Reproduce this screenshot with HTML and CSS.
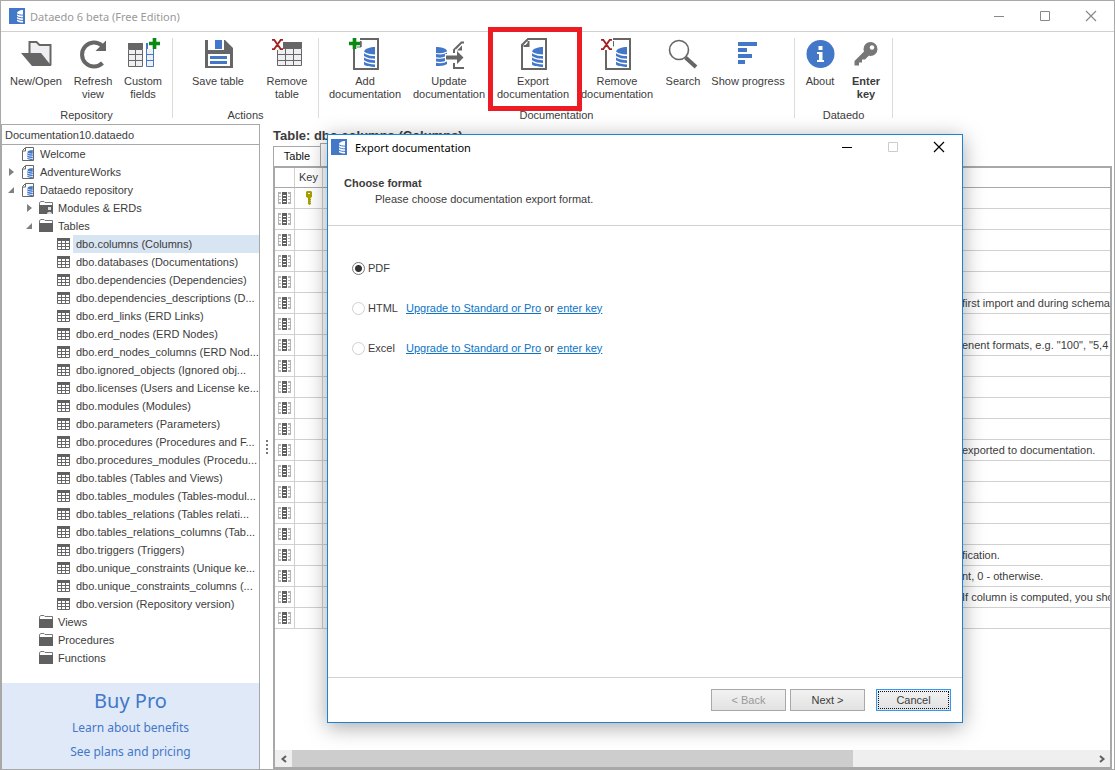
FILE: index.html
```html
<!DOCTYPE html>
<html lang="en">
<head>
<meta charset="utf-8">
<title>Dataedo 6 beta (Free Edition)</title>
<link rel="stylesheet" href="styles.css">
</head>
<body>
<svg class="defs" aria-hidden="true">
  <symbol id="logo" viewBox="0 0 16 16"><path fill="#4378c8" d="M0 0h16v16H0z"/><path fill="#fff" d="M14 2v12.500c-3 0-6-.4-6-2V5c0-1.500 3-3 6-3z"/><path d="M7.500 5.500c2 1.400 4 1.600 6.500 1.600M7.500 8.200c2 1.400 4 1.600 6.500 1.600M7.500 10.800c2 1.400 4 1.600 6.500 1.600" stroke="#4378c8" fill="none"/></symbol>
  <symbol id="db" viewBox="0 0 11 20"><path fill="#4378c8" d="M11 0v7.500C7 7.500 2.500 6.800 0 4.500 1 1.500 6 0 11 0zM0 6.200c3 2 7 2.800 11 2.800v2.800c-4 0-8-.6-11-2.700zM0 10.600c3 2 7 2.700 11 2.700V16c-4 0-8-.6-11-2.700zM0 14.800c3 2 7 2.700 11 2.700V20c-4-.2-9-.6-11-2.500z"/></symbol>
  <symbol id="page" viewBox="0 2 32 36"><path d="M11 3h18v30H5V9z" fill="#fff" stroke="#666" stroke-width="2"/><path d="M12.500 5v6H6.500v-2H8.500L10.500 7V5z" fill="#666"/><use href="#db" x="15" y="11" width="11" height="20"/></symbol>
  <symbol id="plus" viewBox="0 0 12 12"><path fill="#0a8a12" d="M4 0h4v4h4v4H8v4H4V8H0V4h4z"/></symbol>
  <symbol id="cross" viewBox="0 0 12 12"><path d="M0 1h2.500l7 10H12M12 1H9.500l-7 10H0" fill="none" stroke="#a52020" stroke-width="2"/></symbol>
  <symbol id="open" viewBox="0 2 32 36"><path d="M9.500 25V6h7l3 3h11v20" fill="#efeff2" stroke="#666" stroke-width="2"/><path d="M1 17h20l10.500 13H12z" fill="#666"/></symbol>
  <symbol id="refresh" viewBox="0 2 32 36"><path d="M25 9.500A12 12 0 1 0 25.500 27" fill="none" stroke="#666" stroke-width="4"/><path d="M29 4.500V15H18.500z" fill="#666"/></symbol>
  <symbol id="fields" viewBox="0 2 34 36"><path d="M2.500 13.500h14v17h-14zM2.500 18.500h14M2.500 24.500h14M9.500 13v18" fill="#efeff2" stroke="#666"/><path d="M2 7h15v6H2z" fill="#666"/><path d="M20.500 7.500h7v23h-7zM21 12.500h7M21 18.500h7M21 24.500h7" fill="#efeff2" stroke="#4378c8"/><path d="M20 7h8v6h-8z" fill="#4378c8"/><path d="M22 2h12v11H22z" fill="#fff"/><use href="#plus" x="23" y="2" width="11" height="11"/></symbol>
  <symbol id="save" viewBox="0 2 32 36"><path d="M3 4h20l8 8v20H3z" fill="#666"/><path d="M6 4h16v10H6z" fill="#fff"/><path d="M13 4h7v9h-7z" fill="#4378c8"/><path d="M6 18h22v12H6z" fill="#fff"/><path d="M8 20h17v3H8zM8 25h17v3H8z" fill="#4378c8"/></symbol>
  <symbol id="rmtable" viewBox="0 2 34 36"><path d="M7.500 12.500h24v17h-24zM7 18.500h24M7 24.500h24M15.500 12v17M23.500 12v17" fill="#efeff2" stroke="#666"/><path d="M12 6h20v6H7z" fill="#666"/><path d="M1 2h12v11H8v1H1z" fill="#fff"/><use href="#cross" x="2" y="3" width="11" height="11"/></symbol>
  <symbol id="adddoc" viewBox="0 2 32 36"><use href="#page" y="2" width="32" height="36"/><path d="M0 2h11v11H0z" fill="#fff"/><path d="M5 13.500v3M8 11h4V6" stroke="#666" fill="none"/><use href="#plus" x="0" y="2" width="11" height="11"/></symbol>
  <symbol id="update" viewBox="0 2 32 36"><path d="M3 11c5 0 10 1 11 4v13c-3 2-7 2-11 2z" fill="#4378c8"/><path d="M3 17.500c5 1 8 .5 11-1.500M3 21.800c5 1 8 .5 11-1.500M3 26.200c5 1 8 .5 11-1.500" stroke="#fff" fill="none" stroke-width="1.200"/><path d="M21 17v-3L28.500 6.500H31M21 27v5h10" fill="none" stroke="#666" stroke-width="2"/><path d="M24 14.500l5-5v5z" fill="#666"/><path d="M12 18h10v-5l9 8.500-9 8V25H12z" fill="#fff"/><path d="M13 19.500h11V15l6.500 6.500L24 28v-4.500H13z" fill="#666"/></symbol>
  <symbol id="rmdoc" viewBox="0 2 32 36"><use href="#page" y="2" width="32" height="36"/><path d="M0 2h12v12H0z" fill="#fff"/><path d="M5 14v6" stroke="#666" stroke-width="2"/><path d="M12.500 5v5" stroke="#666"/><use href="#cross" y="3" width="11" height="11"/></symbol>
  <symbol id="search" viewBox="0 2 32 36"><circle cx="12" cy="14" r="9.500" fill="#fff" stroke="#666" stroke-width="1.600"/><path d="M18.500 21.500L29 31" stroke="#666" stroke-width="4"/></symbol>
  <symbol id="progress" viewBox="0 2 32 36"><path d="M6 6h19v4H6zM6 12h9v4H6zM6 18h14v4H6zM6 24h7v4H6z" fill="#4378c8"/></symbol>
  <symbol id="about" viewBox="0 2 32 36"><circle cx="16.500" cy="18" r="14" fill="#4378c8"/><path d="M14.500 10h4v4h-4zM13 16h5.500v8H20v2h-7v-2h2v-6h-2z" fill="#fff"/></symbol>
  <symbol id="key" viewBox="0 2 32 36"><circle cx="20.500" cy="13" r="7" fill="#777"/><circle cx="22" cy="11.500" r="2.200" fill="#fff"/><path d="M14.500 15L4.500 25v4.500H9v-3h3v-3h3l4-4z" fill="#777"/></symbol>
  <symbol id="sdoc" viewBox="0 0 14 16"><path d="M4.500 1.500h8v13h-11v-10z" fill="#fff" stroke="#666"/><path d="M4.500 2v3H2" stroke="#666" fill="none"/><use href="#db" x="6" y="4" width="6" height="10"/></symbol>
  <symbol id="folder" viewBox="0 0 14 16"><path d="M.5 5V2.500L2 1.500h3l1 1h7.500V5" fill="#fff" stroke="#777"/><path d="M0 5h14v9H0z" fill="#606060"/></symbol>
  <symbol id="stable" viewBox="0 0 14 16"><path d="M.5 2.500h12v11H.5zM0 7.500h13M0 10.500h13M4.500 4v10M8.500 4v10" fill="#fff" stroke="#666"/><path d="M0 2h13v3H0z" fill="#606060"/></symbol>
  <symbol id="column" viewBox="0 0 14 14"><path d="M0 1h1v12H0zM1 1h2v2H1zM1 5h2v1H1zM1 8h2v1H1zM1 11h2v2H1zM12 1h1v12h-1zM10 1h2v2h-2zM10 5h2v1h-2zM10 8h2v1h-2zM10 11h2v2h-2z" fill="#b4b4b4"/><path d="M4 1h5v12H4z" fill="#606060"/><path d="M5 4h3v1H5zM5 7h3v1H5zM5 10h3v1H5z" fill="#fff"/></symbol>
  <symbol id="gold" viewBox="0 0 8 14"><path d="M2 0h4l1 1v5L5.500 7v1H6v1h-.5v1H6v1h-.5v1H6v1L4.500 14 3 13V7L1 6V1z" fill="#a8a000"/><path d="M3 2h2v1H3z" fill="#fff"/></symbol>
  <symbol id="closed" viewBox="0 0 8 8"><path d="M2 0l5 4-5 4z" fill="#808080"/></symbol>
  <symbol id="expanded" viewBox="0 0 8 8"><path d="M7 1v6H1z" fill="#808080"/></symbol>
  <symbol id="min" viewBox="0 0 12 12"><path d="M1 6.500h10" stroke="currentColor"/></symbol>
  <symbol id="max" viewBox="0 0 12 12"><path d="M1.500 1.500h9v9h-9z" fill="none" stroke="currentColor"/></symbol>
  <symbol id="close" viewBox="0 0 12 12"><path d="M1 1l10 10M11 1L1 11" stroke="currentColor" stroke-width="1.200"/></symbol>
  <symbol id="left" viewBox="0 0 8 8"><path d="M6 1L2.500 4 6 7" fill="none" stroke="#606060" stroke-width="2"/></symbol>
  <symbol id="right" viewBox="0 0 8 8"><path d="M2 1l3.500 3L2 7" fill="none" stroke="#606060" stroke-width="2"/></symbol>
</svg>
<div class="app">
  <header class="titlebar">
    <svg class="logo"><use href="#logo"/></svg>
    <h1 class="app-title">Dataedo 6 beta (Free Edition)</h1>
    <div class="window-controls">
      <button aria-label="Minimize"><svg><use href="#min"/></svg></button>
      <button aria-label="Maximize"><svg><use href="#max"/></svg></button>
      <button aria-label="Close"><svg><use href="#close"/></svg></button>
    </div>
  </header>
  <nav class="ribbon" aria-label="Ribbon">
    <section class="group repository">
      <div class="tools">
        <button class="tool wide"><svg><use href="#open"/></svg>New/Open</button>
        <button class="tool"><svg><use href="#refresh"/></svg>Refresh view</button>
        <button class="tool"><svg><use href="#fields"/></svg>Custom fields</button>
      </div>
      <h2 class="group-name">Repository</h2>
    </section>
    <section class="group actions">
      <div class="tools">
        <button class="tool wide"><svg><use href="#save"/></svg>Save table</button>
        <button class="tool remove"><svg><use href="#rmtable"/></svg>Remove table</button>
      </div>
      <h2 class="group-name">Actions</h2>
    </section>
    <section class="group documentation">
      <div class="tools">
        <button class="tool doc"><svg><use href="#adddoc"/></svg>Add documentation</button>
        <button class="tool doc"><svg><use href="#update"/></svg>Update documentation</button>
        <button class="tool doc highlighted"><svg><use href="#page"/></svg>Export documentation</button>
        <button class="tool doc"><svg><use href="#rmdoc"/></svg>Remove documentation</button>
        <button class="tool search"><svg><use href="#search"/></svg>Search</button>
        <button class="tool progress"><svg><use href="#progress"/></svg>Show progress</button>
      </div>
      <h2 class="group-name">Documentation</h2>
    </section>
    <section class="group about">
      <div class="tools">
        <button class="tool"><svg><use href="#about"/></svg>About</button>
        <button class="tool strong"><svg><use href="#key"/></svg>Enter key</button>
      </div>
      <h2 class="group-name">Dataedo</h2>
    </section>
  </nav>
  <div class="workspace">
    <aside class="sidebar">
      <input class="repo-name" type="text" aria-label="Repository file" value="Documentation10.dataedo">
      <ul class="tree">
        <li><div class="node"><i></i><svg><use href="#sdoc"/></svg><span>Welcome</span></div></li>
        <li><div class="node"><i><svg><use href="#closed"/></svg></i><svg><use href="#sdoc"/></svg><span>AdventureWorks</span></div></li>
        <li><div class="node"><i><svg><use href="#expanded"/></svg></i><svg><use href="#sdoc"/></svg><span>Dataedo repository</span></div>
          <ul>
            <li><div class="node"><i><svg><use href="#closed"/></svg></i><svg><use href="#folder"/><path d="M9 7h3v3H9zM8 14c0-3 5-3 5 0z" fill="#ddd"/></svg><span>Modules &amp; ERDs</span></div></li>
            <li><div class="node"><i><svg><use href="#expanded"/></svg></i><svg><use href="#folder"/></svg><span>Tables</span></div>
              <ul>
                <li><div class="node selected"><i></i><svg><use href="#stable"/></svg><span>dbo.columns (Columns)</span></div></li>
                <li><div class="node"><i></i><svg><use href="#stable"/></svg><span>dbo.databases (Documentations)</span></div></li>
                <li><div class="node"><i></i><svg><use href="#stable"/></svg><span>dbo.dependencies (Dependencies)</span></div></li>
                <li><div class="node"><i></i><svg><use href="#stable"/></svg><span>dbo.dependencies_descriptions (D...</span></div></li>
                <li><div class="node"><i></i><svg><use href="#stable"/></svg><span>dbo.erd_links (ERD Links)</span></div></li>
                <li><div class="node"><i></i><svg><use href="#stable"/></svg><span>dbo.erd_nodes (ERD Nodes)</span></div></li>
                <li><div class="node"><i></i><svg><use href="#stable"/></svg><span>dbo.erd_nodes_columns (ERD Nod...</span></div></li>
                <li><div class="node"><i></i><svg><use href="#stable"/></svg><span>dbo.ignored_objects (Ignored obj...</span></div></li>
                <li><div class="node"><i></i><svg><use href="#stable"/></svg><span>dbo.licenses (Users and License ke...</span></div></li>
                <li><div class="node"><i></i><svg><use href="#stable"/></svg><span>dbo.modules (Modules)</span></div></li>
                <li><div class="node"><i></i><svg><use href="#stable"/></svg><span>dbo.parameters (Parameters)</span></div></li>
                <li><div class="node"><i></i><svg><use href="#stable"/></svg><span>dbo.procedures (Procedures and F...</span></div></li>
                <li><div class="node"><i></i><svg><use href="#stable"/></svg><span>dbo.procedures_modules (Procedu...</span></div></li>
                <li><div class="node"><i></i><svg><use href="#stable"/></svg><span>dbo.tables (Tables and Views)</span></div></li>
                <li><div class="node"><i></i><svg><use href="#stable"/></svg><span>dbo.tables_modules (Tables-modul...</span></div></li>
                <li><div class="node"><i></i><svg><use href="#stable"/></svg><span>dbo.tables_relations (Tables relati...</span></div></li>
                <li><div class="node"><i></i><svg><use href="#stable"/></svg><span>dbo.tables_relations_columns (Tab...</span></div></li>
                <li><div class="node"><i></i><svg><use href="#stable"/></svg><span>dbo.triggers (Triggers)</span></div></li>
                <li><div class="node"><i></i><svg><use href="#stable"/></svg><span>dbo.unique_constraints (Unique ke...</span></div></li>
                <li><div class="node"><i></i><svg><use href="#stable"/></svg><span>dbo.unique_constraints_columns (...</span></div></li>
                <li><div class="node"><i></i><svg><use href="#stable"/></svg><span>dbo.version (Repository version)</span></div></li>
              </ul>
            </li>
            <li><div class="node"><i></i><svg><use href="#folder"/></svg><span>Views</span></div></li>
            <li><div class="node"><i></i><svg><use href="#folder"/></svg><span>Procedures</span></div></li>
            <li><div class="node"><i></i><svg><use href="#folder"/></svg><span>Functions</span></div></li>
          </ul>
        </li>
      </ul>
      <div class="promo">
        <a class="promo-title" href="#buy">Buy Pro</a>
        <a href="#benefits">Learn about benefits</a>
        <a href="#pricing">See plans and pricing</a>
      </div>
    </aside>
    <div class="splitter"><span></span><span></span><span></span><span></span></div>
    <main class="content">
      <h2 class="table-title">Table: dbo.columns (Columns)</h2>
      <div class="tabs"><button class="tab">Table</button><button class="tab active" aria-label="Columns"></button></div>
      <div class="grid-frame">
        <table class="grid">
          <colgroup><col class="c-icon"><col class="c-key"><col class="c-mid"><col></colgroup>
          <thead><tr><th></th><th>Key</th><th></th><th></th></tr></thead>
          <tbody>
            <tr><td><svg><use href="#column"/></svg></td><td><svg class="gold"><use href="#gold"/></svg></td><td></td><td></td></tr>
            <tr><td><svg><use href="#column"/></svg></td><td></td><td></td><td></td></tr>
            <tr><td><svg><use href="#column"/></svg></td><td></td><td></td><td></td></tr>
            <tr><td><svg><use href="#column"/></svg></td><td></td><td></td><td></td></tr>
            <tr><td><svg><use href="#column"/></svg></td><td></td><td></td><td></td></tr>
            <tr><td><svg><use href="#column"/></svg></td><td></td><td></td><td>first import and during schema</td></tr>
            <tr><td><svg><use href="#column"/></svg></td><td></td><td></td><td></td></tr>
            <tr><td><svg><use href="#column"/></svg></td><td></td><td></td><td>enent formats, e.g. "100", "5,4</td></tr>
            <tr><td><svg><use href="#column"/></svg></td><td></td><td></td><td></td></tr>
            <tr><td><svg><use href="#column"/></svg></td><td></td><td></td><td></td></tr>
            <tr><td><svg><use href="#column"/></svg></td><td></td><td></td><td></td></tr>
            <tr><td><svg><use href="#column"/></svg></td><td></td><td></td><td></td></tr>
            <tr><td><svg><use href="#column"/></svg></td><td></td><td></td><td>exported to documentation.</td></tr>
            <tr><td><svg><use href="#column"/></svg></td><td></td><td></td><td></td></tr>
            <tr><td><svg><use href="#column"/></svg></td><td></td><td></td><td></td></tr>
            <tr><td><svg><use href="#column"/></svg></td><td></td><td></td><td></td></tr>
            <tr><td><svg><use href="#column"/></svg></td><td></td><td></td><td></td></tr>
            <tr><td><svg><use href="#column"/></svg></td><td></td><td></td><td>fication.</td></tr>
            <tr><td><svg><use href="#column"/></svg></td><td></td><td></td><td>nt, 0 - otherwise.</td></tr>
            <tr><td><svg><use href="#column"/></svg></td><td></td><td></td><td>If column is computed, you sho</td></tr>
            <tr><td><svg><use href="#column"/></svg></td><td></td><td></td><td></td></tr>
          </tbody>
        </table>
        <div class="scrollbar">
          <button aria-label="Scroll left"><svg><use href="#left"/></svg></button>
          <div class="track"><div class="thumb"></div></div>
          <button aria-label="Scroll right"><svg><use href="#right"/></svg></button>
        </div>
      </div>
    </main>
  </div>
  <section class="dialog" role="dialog" aria-labelledby="dialog-title">
    <header class="dialog-bar">
      <svg class="logo"><use href="#logo"/></svg>
      <h2 class="dialog-title" id="dialog-title">Export documentation</h2>
      <div class="window-controls">
        <button aria-label="Minimize"><svg><use href="#min"/></svg></button>
        <button aria-label="Maximize" disabled><svg><use href="#max"/></svg></button>
        <button aria-label="Close"><svg><use href="#close"/></svg></button>
      </div>
    </header>
    <div class="intro">
      <h3>Choose format</h3>
      <p>Please choose documentation export format.</p>
    </div>
    <div class="formats">
      <div class="format"><input type="radio" name="format" id="pdf" checked><label for="pdf">PDF</label></div>
      <div class="format"><input type="radio" name="format" id="html" disabled><label for="html">HTML</label><p><a href="#upgrade">Upgrade to Standard or Pro</a> or <a href="#key-entry">enter key</a></p></div>
      <div class="format"><input type="radio" name="format" id="excel" disabled><label for="excel">Excel</label><p><a href="#upgrade">Upgrade to Standard or Pro</a> or <a href="#key-entry">enter key</a></p></div>
    </div>
    <footer class="dialog-actions">
      <button disabled>&lt; Back</button>
      <button>Next &gt;</button>
      <button class="cancel">Cancel</button>
    </footer>
  </section>
</div>
</body>
</html>
```
FILE: styles.css
```css
* { box-sizing: border-box; }

:root {
  --text: #3c3c3c;
  --blue: #4378c8;
  --frame: #a8a8a8;
  --line: #d0d0d0;
  --ui: "Liberation Sans", Arial, sans-serif;
}

body {
  margin: 0;
  background: #fff;
  color: var(--text);
  font: 11px/13px var(--ui);
}

h1, h2, h3, p, ul { margin: 0; padding: 0; font: inherit; }
button, input { margin: 0; padding: 0; border: 0; background: none; color: inherit; font: inherit; }
svg { display: block; flex: none; }
.defs { position: absolute; width: 0; height: 0; }

.app {
  position: relative;
  display: flex;
  flex-direction: column;
  min-height: 100vh;
  border: 1px solid var(--frame);
}

/* Title bar */
.titlebar {
  display: flex;
  align-items: center;
  height: 31px;
  padding: 0 11px 0 8px;
  border-bottom: 1px solid var(--line);
}
.logo { width: 16px; height: 16px; }
.app-title { margin-left: 5px; color: #999; font-family: "Noto Sans", sans-serif; }
.window-controls { display: flex; gap: 22px; margin-left: auto; color: #888; }
.window-controls button { width: 24px; height: 24px; }
.window-controls svg { width: 12px; height: 12px; margin: auto; }

/* Ribbon */
.ribbon { display: flex; height: 92px; padding: 6px 0 3px; }
.group { display: flex; flex-direction: column; height: 80px; border-right: 1px solid #dcdcdc; }
.tools { display: flex; height: 71px; flex: none; padding: 0 3px; }
.tool { position: relative; display: flex; flex-direction: column; align-items: center; width: 50px; text-align: center; }
.tool svg { width: 34px; height: 36px; margin-bottom: 1px; }
.tool.wide { width: 64px; }
.tool.remove { width: 62px; }
.tool.doc { width: 84px; }
.tool.search { width: 48px; }
.tool.progress { width: 82px; }
.tool.strong { padding: 0 6px; font-weight: bold; }
.repository .tools { padding-right: 4px; }
.actions .tools { gap: 6px; padding: 0 0 0 13px; }
.documentation .tools { padding: 0 5px 0 4px; }
.about .tools { padding-left: 2px; }
.about .tool { width: 46px; }
.group-name { text-align: center; }
.highlighted::after {
  content: "";
  position: absolute;
  z-index: 1;
  inset: -11px -7px -2px -3px;
  border: 5px solid #ed1c24;
}

/* Sidebar */
.workspace { display: flex; flex: 1; }
.sidebar { display: flex; flex-direction: column; width: 259px; border-right: 1px solid var(--frame); border-left: 1px solid var(--frame); }
.repo-name { height: 21px; padding: 0 3px; border: solid var(--frame); border-width: 1px 0; }
.tree { padding-left: 5px; list-style: none; }
.tree ul { padding-left: 18px; list-style: none; }
.node { display: flex; align-items: center; height: 18px; }
.node i { width: 14px; flex: none; }
.node svg { width: 14px; height: 16px; }
.node i svg { width: 8px; height: 8px; }
.node span { flex: 1; min-width: 0; margin-left: 2px; padding-left: 3px; overflow: hidden; line-height: 18px; white-space: nowrap; }
.selected span { background: #d7e4f2; }
.promo { display: flex; flex-direction: column; align-items: center; height: 86px; margin-top: auto; padding-top: 3px; background: #e0e9f8; font: 12px/24px "Noto Sans", sans-serif; }
.promo a { color: var(--blue); text-decoration: none; }
.promo .promo-title { font-size: 20px; line-height: 30px; }
.splitter { display: flex; flex-direction: column; justify-content: center; align-items: center; gap: 2px; width: 13px; }
.splitter span { width: 2px; height: 2px; background: #777; }

/* Table view */
.content { display: flex; flex: 1; flex-direction: column; min-width: 0; padding: 4px 2px 0 0; }
.table-title { font-size: 13px; font-weight: bold; line-height: 15px; }
.tabs { display: flex; align-items: flex-end; height: 23px; }
.tab { width: 48px; height: 20px; border: 1px solid var(--frame); border-bottom: 0; color: #111; }
.tab.active { height: 23px; margin-left: -1px; background: #fff; }
.grid-frame { display: flex; flex: 1; flex-direction: column; border: 2px solid var(--frame); }
.grid { width: 100%; border-collapse: separate; border-spacing: 0; table-layout: fixed; }
.c-icon { width: 20px; }
.c-key { width: 28px; }
.c-mid { width: 639px; }
.grid th, .grid td { height: 21px; padding: 0; overflow: hidden; border-bottom: 1px solid var(--line); font-weight: normal; line-height: 20px; white-space: nowrap; }
.grid th { height: 20px; line-height: 19px; border-bottom-color: var(--frame); }
.grid th:nth-child(-n+2), .grid td:nth-child(-n+2) { border-right: 1px solid var(--line); }
.grid svg { width: 14px; height: 14px; margin: 0 0 0 3px; }
.grid .gold { width: 8px; margin: 0 auto; }
.scrollbar { display: flex; height: 17px; margin-top: auto; background: #efefef; }
.scrollbar button { width: 17px; }
.scrollbar svg { width: 8px; height: 8px; margin: auto; }
.track { flex: 1; }
.thumb { width: 70%; height: 100%; background: #cdcdcd; }

/* Export dialog */
.dialog {
  position: absolute;
  z-index: 2;
  top: 133px;
  left: 326px;
  display: flex;
  flex-direction: column;
  width: 636px;
  height: 589px;
  border: 1px solid #1883d7;
  background: #fff;
  box-shadow: 0 4px 20px rgba(0, 0, 0, .35);
}
.dialog-bar { display: flex; align-items: center; height: 24px; padding: 0 11px 0 3px; color: #000; }
.dialog-title { margin-left: 8px; font-family: "Noto Sans", sans-serif; }
.dialog .window-controls { color: #000; }
.dialog .window-controls :disabled { color: #ccc; }
.intro { height: 67px; padding: 16px 16px 0; border-bottom: 1px solid var(--line); line-height: 16px; }
.intro h3 { font-weight: bold; }
.intro p { padding-left: 31px; }
.formats { display: flex; flex: 1; flex-direction: column; gap: 24px; padding: 34px 24px; }
.format { display: flex; align-items: center; height: 16px; }
.format input { appearance: none; width: 13px; height: 13px; border: 1px solid #aaa; border-radius: 50%; }
.format input:checked { border-color: #777; background: radial-gradient(circle, #333 3px, #fff 4px); }
.format input:disabled { border-color: #d0d0d0; }
.format label { width: 38px; margin-left: 3px; }
.format a { color: #0a74c8; }
.dialog-actions { display: flex; justify-content: flex-end; gap: 4px; height: 45px; padding: 11px 11px 0; border-top: 1px solid var(--line); }
.dialog-actions button { width: 75px; height: 22px; border: 1px solid #a8a8a8; background: linear-gradient(#f2f2f2, #e2e2e2); }
.dialog-actions :disabled { color: #999; }
.dialog-actions .cancel { margin-left: 7px; border-color: #3296fa; outline: 1px dotted #111; outline-offset: -3px; }
```
